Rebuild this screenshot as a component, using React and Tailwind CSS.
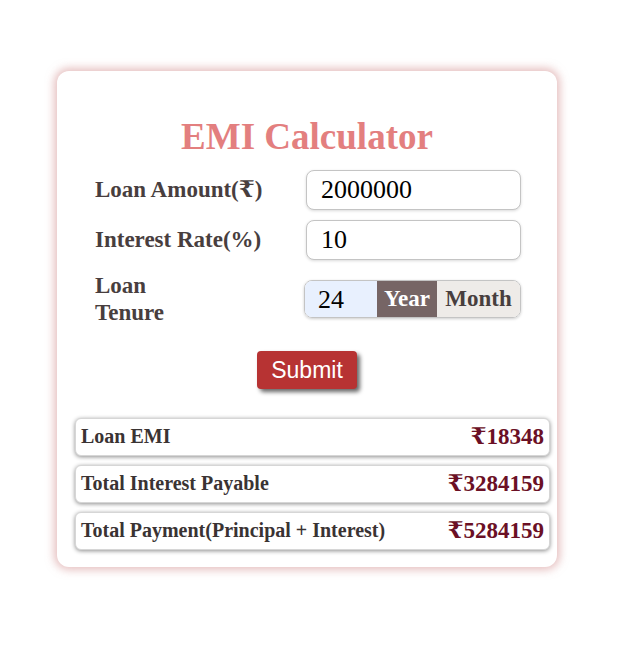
import React, { useState } from "react";

const serif = { fontFamily: '"Liberation Serif", "DejaVu Serif", serif' };

const results = [
  { label: "Loan EMI", value: "₹18348" },
  { label: "Total Interest Payable", value: "₹3284159" },
  { label: "Total Payment(Principal + Interest)", value: "₹5284159" },
];

const App = () => {
  const [amount, setAmount] = useState("2000000");
  const [rate, setRate] = useState("10");
  const [tenure, setTenure] = useState("24");

  return (
    <div className="min-h-[645px] w-full bg-white pt-[71px]" style={serif}>
      <div className="ml-[57px] w-[500px] rounded-[12px] bg-white pt-[44px] pb-[17px] shadow-[0_0_9px_3px_rgba(210,140,140,0.55)]">
        <h1 className="text-center text-[37px] font-bold leading-[44px] text-[#e37f7f]">
          EMI Calculator
        </h1>

        <div className="mt-[11px] flex flex-col gap-[10px] pl-[38px] pr-[36px]">
          <div className="flex items-center justify-between">
            <label className="text-[23px] font-bold text-[#483e3e]">Loan Amount(₹)</label>
            <input
              value={amount}
              onChange={(e) => setAmount(e.target.value)}
              className="h-[40px] w-[215px] rounded-[8px] border border-[#c4c4c4] bg-white pl-[14px] text-[26px] text-black shadow-[0_1px_3px_rgba(0,0,0,0.15)] outline-none"
            />
          </div>
          <div className="flex items-center justify-between">
            <label className="text-[23px] font-bold text-[#483e3e]">Interest Rate(%)</label>
            <input
              value={rate}
              onChange={(e) => setRate(e.target.value)}
              className="h-[40px] w-[215px] rounded-[8px] border border-[#c4c4c4] bg-white pl-[14px] text-[26px] text-black shadow-[0_1px_3px_rgba(0,0,0,0.15)] outline-none"
            />
          </div>
          <div className="mt-[2px] flex items-center justify-between">
            <label className="w-[100px] text-[23px] font-bold leading-[27px] text-[#483e3e]">
              Loan Tenure
            </label>
            <div className="flex h-[38px] w-[217px] overflow-hidden rounded-[8px] border border-[#c4c4c4] shadow-[0_1px_3px_rgba(0,0,0,0.2)]">
              <input
                value={tenure}
                onChange={(e) => setTenure(e.target.value)}
                className="w-[72px] bg-[#e8f0fe] pl-[13px] text-[26px] text-black outline-none"
              />
              <button className="w-[60px] bg-[#766565] text-[23px] font-bold text-white">Year</button>
              <button className="flex-1 bg-[#eeebe8] text-[23px] font-bold text-[#483e3e]">Month</button>
            </div>
          </div>
        </div>

        <div className="mt-[25px] flex justify-center">
          <button
            className="h-[38px] w-[100px] rounded-[4px] bg-[#b73333] text-[23px] text-white shadow-[3px_3px_4px_rgba(0,0,0,0.6)]"
            style={{ fontFamily: '"Liberation Sans", Arial, sans-serif' }}
          >
            Submit
          </button>
        </div>

        <div className="mt-[29px] mr-[7px] ml-[18px] flex flex-col gap-[9px]">
          {results.map((r) => (
            <div
              key={r.label}
              className="flex h-[38px] items-center justify-between rounded-[6px] border border-[#d6d6d6] bg-white pr-[5px] pl-[5px] shadow-[0_1px_4px_rgba(0,0,0,0.45)]"
            >
              <span className="-mt-[3px] text-[20px] font-bold text-[#3a3333]">{r.label}</span>
              <span className="text-[23px] font-bold text-[#6b1025]">{r.value}</span>
            </div>
          ))}
        </div>
      </div>
    </div>
  );
};

export default App;
